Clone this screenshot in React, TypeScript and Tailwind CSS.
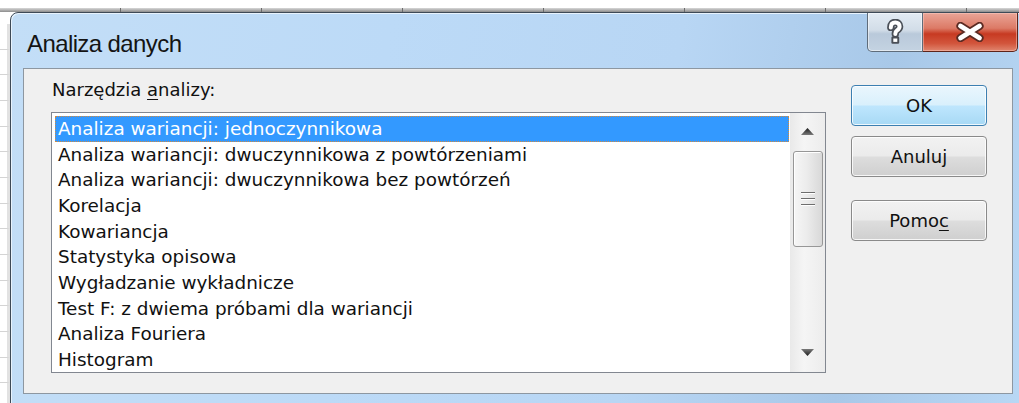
const tools = [
  'Analiza wariancji: jednoczynnikowa',
  'Analiza wariancji: dwuczynnikowa z powtórzeniami',
  'Analiza wariancji: dwuczynnikowa bez powtórzeń',
  'Korelacja',
  'Kowariancja',
  'Statystyka opisowa',
  'Wygładzanie wykładnicze',
  'Test F: z dwiema próbami dla wariancji',
  'Analiza Fouriera',
  'Histogram',
];

function HelpGlyph() {
  const d = 'M4.8 8.4C4.8 5 6.8 3.4 9.3 3.4C12 3.4 13.6 5.1 13.6 7.4C13.6 9.6 12.2 10.6 10.8 11.6C9.7 12.4 9.3 13.2 9.3 15';
  return (
    <svg width="19" height="27" viewBox="0 0 19 27">
      <path d={d} fill="none" stroke="#4a4f57" strokeWidth="7.4" strokeLinecap="round" strokeLinejoin="round" />
      <rect x="5.4" y="17.6" width="7.8" height="7.2" rx="1.2" fill="#4a4f57" />
      <path d={d} fill="none" stroke="#ffffff" strokeWidth="4" strokeLinecap="round" strokeLinejoin="round" />
      <rect x="7.3" y="19.5" width="4" height="3.4" fill="#ffffff" />
    </svg>
  );
}

function CloseGlyph() {
  const d = 'M5.5 4L24.5 16M24.5 4L5.5 16';
  return (
    <svg width="30" height="20" viewBox="0 0 30 20">
      <path d={d} stroke="#5a2a22" strokeWidth="8.2" strokeLinecap="round" />
      <path d={d} stroke="#ffffff" strokeWidth="4.8" strokeLinecap="round" />
    </svg>
  );
}

function Arrow({ down }: { down?: boolean }) {
  return (
    <svg width="13" height="7" viewBox="0 0 13 7" className={down ? 'rotate-180' : ''}>
      <defs>
        <linearGradient id={down ? 'arr-d' : 'arr-u'} x1="0" y1="0" x2="0" y2="1">
          <stop offset="0" stopColor="#1c1c1c" />
          <stop offset="1" stopColor="#7a7a7a" />
        </linearGradient>
      </defs>
      <path d="M6.5 0L13 7H0Z" fill={`url(#${down ? 'arr-d' : 'arr-u'})`} />
    </svg>
  );
}

function DialogButton({ children, primary }: { children: React.ReactNode; primary?: boolean }) {
  return (
    <button
      className={`w-[136px] h-[41px] rounded-[4px] border text-[18px] text-[#111] shadow-[inset_0_0_0_1px_rgba(255,255,255,0.8)] ${
        primary
          ? 'border-[#3c7fb1] bg-[linear-gradient(#eaf6fd_0%,#d9f0fc_48%,#bee6fd_52%,#a7d9f5_100%)]'
          : 'border-[#8a8a8a] bg-[linear-gradient(#f2f2f2_0%,#ebebeb_48%,#dddddd_52%,#cfcfcf_100%)]'
      }`}
    >
      {children}
    </button>
  );
}

export default function App() {
  return (
    <div className="w-[1019px] h-[403px] overflow-hidden bg-white flex flex-col font-['DejaVu_Sans',sans-serif]">
      {/* sheet column header edge behind the dialog */}
      <div className="h-[8px] flex-none bg-white" />
      <div className="h-[4px] flex-none flex bg-[linear-gradient(#d8d8d8,#8c8c8c)]">
        <div className="w-[121px] flex-none border-r border-[#6a6a6a]" />
        {[0, 1, 2, 3, 4, 5, 6].map((i) => (
          <div key={i} className="w-[141px] flex-none border-r border-[#6a6a6a]" />
        ))}
      </div>

      <div className="flex flex-1 min-h-0">
        {/* sheet gridlines left of the dialog */}
        <div className="w-[10px] flex-none flex flex-col pt-[12px] overflow-hidden">
          {Array.from({ length: 16 }).map((_, i) => (
            <div key={i} className="h-[25.67px] flex-none border-b border-[#d4d4d4] border-r-[3px] border-r-[#e2e2e2]" />
          ))}
        </div>

        <div className="w-[1020px] h-[400px] flex-none flex flex-col rounded-tl-[8px] border border-[#3e4a57] shadow-[inset_1px_1px_0_#e8f3fd] bg-[linear-gradient(100deg,#c3def7_0%,#bcdaf7_35%,#b8d6f4_62%,#a8c8e8_82%,#b9d8f5_100%)]">
          {/* title bar */}
          <div className="h-[55px] flex-none flex justify-between">
            <div className="pl-[16px] pt-[17px] text-[24px] leading-[28px] tracking-[-0.6px] text-[#141414] font-['Liberation_Sans',Arial,sans-serif]">
              Analiza danych
            </div>
            <div className="flex mr-[11px] h-[39px]">
              <div className="w-[56px] flex items-center justify-center rounded-bl-[5px] border border-t-0 border-[#5f6c7a] bg-[linear-gradient(#e3ebf3_0%,#d2dde8_45%,#b9c9da_55%,#c4d3e2_100%)] shadow-[inset_0_0_0_1px_rgba(255,255,255,0.5)]">
                <HelpGlyph />
              </div>
              <div className="w-[95px] flex items-center justify-center rounded-br-[5px] border border-t-0 border-l-0 border-[#5e2319] bg-[linear-gradient(#eaa597_0%,#dc7a66_40%,#c73a22_55%,#d2553c_80%,#e0866f_100%)] shadow-[inset_0_0_0_1px_rgba(255,210,200,0.45)]">
                <CloseGlyph />
              </div>
            </div>
          </div>

          {/* client area */}
          <div className="ml-[12px] w-[990px] h-[326px] flex-none flex bg-[#f0f0f0] border border-[#8d97a1]">
            <div className="ml-[27px] pt-[10px] flex flex-col">
              <div className="pl-[1px] text-[18px] leading-[22px] text-[#111]">
                Narzędzia <span className="underline underline-offset-[3px]">a</span>nalizy:
              </div>

              <div className="mt-[11px] w-[775px] h-[261px] flex border border-[#828790] bg-white">
                <div className="flex-1 pl-[3px] pt-[3px] pr-[1px] text-[18.4px] leading-[25.67px] text-[#111]">
                  {tools.map((t, i) => (
                    <div
                      key={t}
                      className={
                        i === 0
                          ? 'h-[25.67px] pl-[2px] bg-[#3399ff] text-white border border-dotted border-[#d08a40] leading-[23.67px]'
                          : 'h-[25.67px] pl-[3px] whitespace-nowrap'
                      }
                    >
                      {t}
                    </div>
                  ))}
                </div>

                {/* vertical scrollbar */}
                <div className="w-[35px] flex-none flex flex-col items-center bg-[linear-gradient(90deg,#e9e9e9,#f5f5f5_40%,#ececec)]">
                  <div className="h-[38px] flex-none flex items-center justify-center pb-[1px]">
                    <Arrow />
                  </div>
                  <div className="w-[30px] h-[96px] flex-none flex flex-col items-center justify-center gap-[4px] rounded-[3px] border border-[#979797] bg-[linear-gradient(90deg,#f6f6f6_0%,#ececec_45%,#d8d8d8_100%)] shadow-[inset_1px_1px_0_#ffffff]">
                    <div className="w-[14px] h-[2px] bg-[#6e6e6e] border-b border-white" />
                    <div className="w-[14px] h-[2px] bg-[#6e6e6e] border-b border-white" />
                    <div className="w-[14px] h-[2px] bg-[#6e6e6e] border-b border-white" />
                  </div>
                  <div className="flex-1" />
                  <div className="h-[36px] flex-none flex items-center justify-center pb-[4px]">
                    <Arrow down />
                  </div>
                </div>
              </div>
            </div>

            <div className="ml-[25px] pt-[16px] flex flex-col">
              <DialogButton primary>OK</DialogButton>
              <div className="mt-[10px]">
                <DialogButton>Anuluj</DialogButton>
              </div>
              <div className="mt-[23px]">
                <DialogButton>
                  Pomo<span className="underline underline-offset-[3px]">c</span>
                </DialogButton>
              </div>
            </div>
          </div>
        </div>
      </div>
    </div>
  );
}
